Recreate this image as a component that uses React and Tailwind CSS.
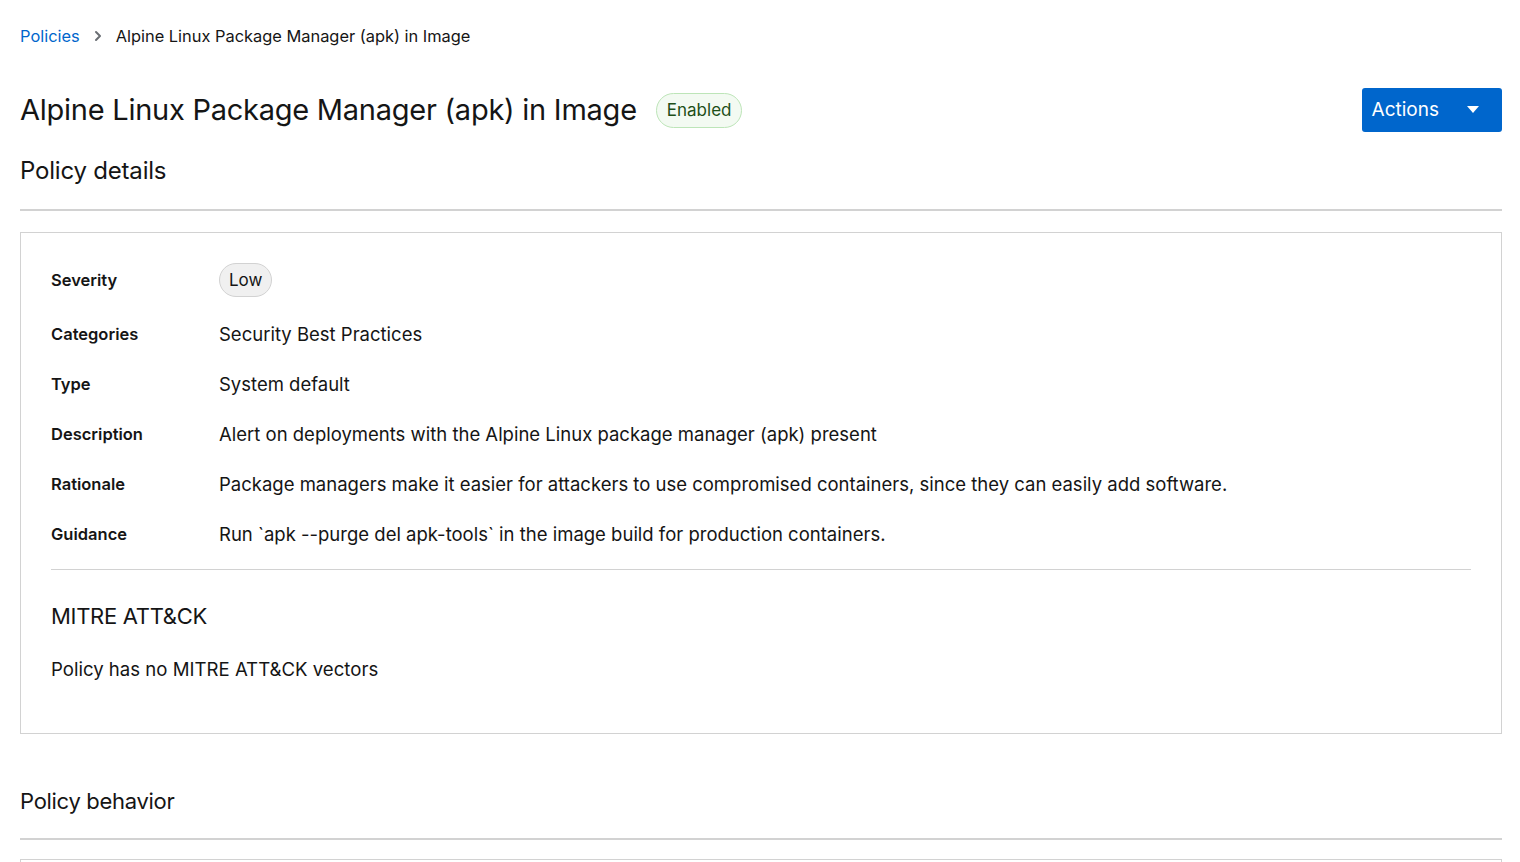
import { ChevronRight } from "lucide-react";

const rows = [
	{ label: "Categories", value: "Security Best Practices" },
	{ label: "Type", value: "System default" },
	{ label: "Description", value: "Alert on deployments with the Alpine Linux package manager (apk) present" },
	{
		label: "Rationale",
		value: "Package managers make it easier for attackers to use compromised containers, since they can easily add software.",
	},
	{ label: "Guidance", value: "Run `apk --purge del apk-tools` in the image build for production containers." },
];

const App = () => {
	return (
		<div className="min-h-screen bg-white pl-5 pr-[18px] pt-6 font-['Inter','Open_Sans',sans-serif] text-[#151515]">
			{/* Breadcrumb */}
			<nav className="flex h-6 items-center text-[16.4px]">
				<a className="text-[#0066cc]">Policies</a>
				<ChevronRight className="ml-[10px] mr-[10px] h-4 w-4 text-[#6a6e73]" strokeWidth={3} />
				<span>Alpine Linux Package Manager (apk) in Image</span>
			</nav>

			{/* Title */}
			<div className="mt-[40px] flex items-center justify-between">
				<div className="flex items-center gap-[19px]">
					<h1 className="text-[29px] leading-[36px] tracking-[-0.25px]">Alpine Linux Package Manager (apk) in Image</h1>
					<span className="rounded-full border border-[#bde5b8] bg-[#f3faf2] px-[10px] py-[4px] text-[17px] leading-[25px] text-[#1e4f18]">
						Enabled
					</span>
				</div>
				<button className="flex h-[44px] items-center gap-[28px] rounded-[3px] bg-[#0066cc] pl-[10px] pr-[23px] text-[19px] text-white">
					Actions
					<svg width="12" height="8" viewBox="0 0 12 8">
						<path d="M0 0 H12 L6 7 Z" fill="white" />
					</svg>
				</button>
			</div>

			<h2 className="mt-[23px] text-[24px] leading-[32px] tracking-[-0.2px]">Policy details</h2>
			<div className="mt-[22px] h-[2px] bg-[#d2d2d2]" />

			{/* Details card */}
			<div className="mt-[21px] border border-[#d2d2d2] px-[30px] pt-[30px] pb-[51px]">
				<div className="flex flex-col gap-6">
					<div className="flex items-center">
						<div className="w-[168px] text-[16.5px] font-semibold">Severity</div>
						<span className="rounded-full border border-[#d2d2d2] bg-[#f0f0f0] px-[9px] py-[4px] text-[17px] leading-[24px]">
							Low
						</span>
					</div>
					{rows.map((row) => (
						<div key={row.label} className="flex items-center">
							<div className="w-[168px] text-[16.5px] font-semibold">{row.label}</div>
							<div className="text-[18.5px] leading-[26px]">{row.value}</div>
						</div>
					))}
				</div>
				<div className="mt-[22px] h-px bg-[#d2d2d2]" />
				<h3 className="mt-[32px] text-[22px] leading-[28px] tracking-[-0.3px]">MITRE ATT&amp;CK</h3>
				<p className="mt-[26px] text-[18.6px] leading-[26px]">Policy has no MITRE ATT&amp;CK vectors</p>
			</div>

			<h2 className="mt-[52px] text-[22px] leading-[30px] tracking-[-0.3px]">Policy behavior</h2>
			<div className="mt-[22px] h-[2px] bg-[#d2d2d2]" />
			<div className="mt-[19px] h-[40px] border border-[#d2d2d2]" />
		</div>
	);
};

export default App;
